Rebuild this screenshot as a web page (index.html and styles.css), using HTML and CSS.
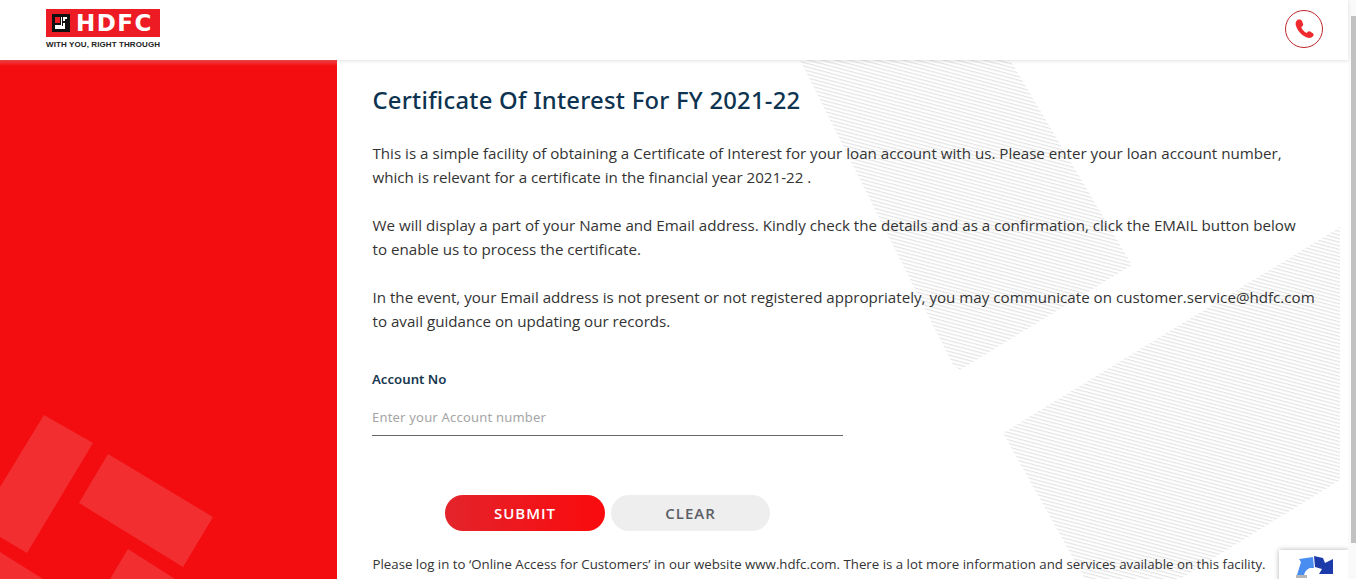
FILE: index.html
```html
<!DOCTYPE html>
<html lang="en">
<head>
<meta charset="utf-8">
<title>Certificate Of Interest</title>
<link rel="stylesheet" href="styles.css">
</head>
<body>
<div class="page">
  <div class="main">
    <header class="topbar">
      <div class="logo">
        <div class="logo-box">
          <svg class="logo-mark" viewBox="0 0 18 18" aria-hidden="true">
            <rect width="18" height="18" fill="#111"/>
            <rect x="3" y="3" width="5" height="6" fill="#ed1c24"/>
            <path d="M10 3h5v5h-5z" fill="#111"/>
            <path d="M3 11h6V3h1v9H3z" fill="#fff"/>
            <path d="M3 12h8V3h4v2h-2v10H3z" fill="#fff"/>
            <path d="M11 7h2v2h-2z" fill="#111"/>
          </svg>
          <span class="logo-name">HDFC</span>
        </div>
        <div class="logo-tag">WITH YOU, RIGHT THROUGH</div>
      </div>
      <a class="call" href="#" aria-label="Call">
        <svg viewBox="0 0 24 24" aria-hidden="true"><path d="M5 2C7 1.200 9 1.700 9.800 3.200L11 6.500C11.400 7.700 10.900 8.700 9.800 9.300L9 9.800C10 12.800 12 15 15 16.300L15.800 15.400C16.600 14.500 17.700 14.300 18.700 14.800L21.600 16.500C22.800 17.300 22.900 18.800 21.800 19.900 20 21.800 17.500 22.300 14.500 21 9 18.500 5 14 3.200 8.500 2.400 6 3 3.400 5 2Z"/></svg>
      </a>
    </header>
    <div class="body">
      <aside class="side">
        <svg class="side-art" viewBox="0 0 337 519" aria-hidden="true">
          <g fill="#f22e30">
            <path d="M44 355 93 383 27 493 0 477V427Z"/>
            <path d="M108 394 213 457 183 507 79 443Z"/>
            <path d="M128 489 175 519H110Z"/>
            <path d="M0 492 43 519H0Z"/>
          </g>
        </svg>
      </aside>
      <main class="content">
        <svg class="hatch" viewBox="0 0 1011 519" aria-hidden="true">
          <defs>
            <pattern id="lines" width="8" height="3.500" patternUnits="userSpaceOnUse" patternTransform="rotate(15)">
              <rect width="8" height="1.200" fill="#e4e4e4"/>
            </pattern>
          </defs>
          <path fill="url(#lines)" d="M463 0H673L795 205 623 310 616 305Z"/>
          <path fill="url(#lines)" d="M1003 167 666 373 748 519H843L1003 420Z"/>
        </svg>
        <div class="copy">
          <h1 class="title">Certificate Of Interest For FY 2021-22</h1>
          <p class="para">This is a simple facility of obtaining a Certificate of Interest for your loan account with us. Please enter your loan account number,<br>which is relevant for a certificate in the financial year 2021-22 .</p>
          <p class="para">We will display a part of your Name and Email address. Kindly check the details and as a confirmation, click the EMAIL button below<br>to enable us to process the certificate.</p>
          <p class="para">In the event, your Email address is not present or not registered appropriately, you may communicate on customer.service@hdfc.com<br>to avail guidance on updating our records.</p>
          <form class="form">
            <label class="label" for="acct">Account No</label>
            <input class="input" id="acct" type="text" placeholder="Enter your Account number">
            <div class="actions">
              <button class="btn btn-primary" type="button">SUBMIT</button>
              <button class="btn btn-muted" type="button">CLEAR</button>
            </div>
          </form>
          <p class="note">Please log in to ‘Online Access for Customers’ in our website www.hdfc.com. There is a lot more information and services available on this facility.</p>
        </div>
        <div class="recaptcha">
          <svg viewBox="0 0 38 24" aria-hidden="true">
            <path d="M1 20 5 7 3 4 17 2 18 13H14C11 14 9 16 8 20Z" fill="#4a8df0"/>
            <path d="M18 1 27 3 29 8 37 4V19H23L26 14 19 12Z" fill="#1c3aa9"/>
            <path d="M0 20H11V23H0Z" fill="#b5b5b5"/>
          </svg>
        </div>
      </main>
    </div>
  </div>
  <div class="scrollbar"><div class="thumb"></div></div>
</div>
</body>
</html>
```
FILE: styles.css
```css
* { box-sizing: border-box; }
html, body { margin: 0; height: 100%; overflow: hidden; background: #fff; }
body { font-family: "Open Sans", "Noto Sans", sans-serif; color: #333; }
.page { display: flex; width: 1356px; height: 579px; overflow: hidden; }
.main { flex: 1; display: flex; flex-direction: column; min-width: 0; }
.scrollbar { width: 8px; padding: 16px 0 36px 3px; background: #fafafa; }
.thumb { height: 100%; background: #c1c1c1; }
.topbar {
  height: 60px; flex: none; position: relative; z-index: 2; background: #fff;
  display: flex; justify-content: space-between; align-items: center;
  padding: 0 25px 3px 46px;
  box-shadow: 0 1px 4px rgba(0,0,0,.12);
}
.logo { width: 114px; margin-top: 2px; }
.logo-box { height: 28px; background: #ed1c24; display: flex; align-items: center; padding-left: 6px; gap: 6px; }
.logo-mark { width: 18px; height: 18px; flex: none; }
.logo-name { font: 700 23px/28px "DejaVu Sans", sans-serif; color: #fff; letter-spacing: 1.5px; }
.logo-tag { font: 700 8px/10px "Liberation Sans", Arial, sans-serif; color: #222; margin-top: 3px; white-space: nowrap; letter-spacing: .1px; }
.call { width: 38px; height: 38px; border-radius: 50%; border: 1px solid #c0272d; display: flex; align-items: center; justify-content: center; }
.call svg { width: 22px; height: 22px; fill: #ee2a2e; }
.body { flex: 1; display: flex; min-height: 0; }
.side { width: 337px; flex: none; background: linear-gradient(#f9484a, #f30d10 6px); position: relative; overflow: hidden; }
.side-art { display: block; width: 337px; height: 519px; }
.content { flex: 1; position: relative; min-width: 0; overflow: hidden; }
.hatch { position: absolute; left: 0; top: 0; width: 1011px; height: 519px; }
.copy { position: relative; padding: 24px 0 0 35px; }
.title { margin: 0 0 25px .5px; font: 500 23.8px/32px "Noto Sans", sans-serif; color: #0d3350; letter-spacing: .25px; }
.para { margin: 0 0 24px .5px; font-size: 15.15px; line-height: 24px; white-space: nowrap; color: #333; }
.form { display: flex; flex-direction: column; margin-top: 36px; }
.label { font: 600 13.2px/20px "Noto Sans", sans-serif; color: #17384f; }
.input {
  width: 471px; height: 38px; margin-top: 9px; padding: 0; border: 0; border-bottom: 1px solid #666;
  background: transparent; outline: 0; font: 400 13px "Noto Sans", sans-serif; letter-spacing: .2px;
}
.input::placeholder { color: #a5a5a5; opacity: 1; }
.actions { display: flex; gap: 6px; margin: 59px 0 0 73px; }
.btn { width: 160px; height: 36px; border: 0; border-radius: 18px; font: 600 15px/36px "Open Sans", sans-serif; letter-spacing: 1px; padding: 0; }
.btn-primary { background: linear-gradient(90deg, #e3242b, #fa0a0d); color: #fff; }
.btn-muted { width: 159px; background: #eeeeee; color: #5c5f66; }
.note { margin: 23px 0 0 .5px; font-size: 13.27px; line-height: 20px; white-space: nowrap; color: #333; }
.recaptcha { position: absolute; left: 942px; top: 490px; width: 70px; height: 60px; background: #fff; box-shadow: 0 0 5px rgba(0,0,0,.3); padding: 5px 0 0 17px; }
.recaptcha svg { display: block; width: 38px; height: 24px; }
```
